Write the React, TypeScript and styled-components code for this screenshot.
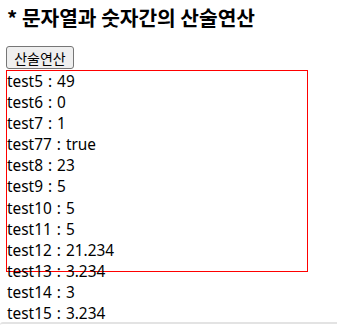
import styled, { createGlobalStyle } from 'styled-components'

const GlobalStyle = createGlobalStyle`
  html, body {
    margin: 0;
    background: #ffffff;
  }
  body {
    padding: 0 6px;
    font-family: 'Noto Sans', 'Noto Sans CJK KR', sans-serif;
    color: #000000;
  }
`

const Title = styled.h3`
  margin: 4px 0 16px 1px;
  font-family: 'Noto Sans CJK KR', sans-serif;
  font-size: 20.3px;
  font-weight: 700;
  line-height: 26px;
`

const Button = styled.button`
  display: block;
  box-sizing: border-box;
  width: 68px;
  height: 23px;
  margin: 0 0 1px;
  padding: 0;
  font-family: 'Noto Sans CJK KR', sans-serif;
  font-size: 14px;
  line-height: 1;
  color: #000000;
  background: #efefef;
  border: 1px solid #767676;
  border-radius: 3px;
`

const Section = styled.div`
  padding-bottom: 60px;
`

const ResultBox = styled.div`
  width: 300px;
  height: 200px;
  border: 1px solid #ff0000;
`

const Line = styled.div`
  font-size: 15.4px;
  line-height: 21.1px;
  white-space: pre;
  word-spacing: 1px;
`

const WindowEdge = styled.div`
  position: fixed;
  left: 0;
  right: 0;
  bottom: 0;
  height: 1px;
  background: #ffffff;
  border-top: 2px solid #e3e3e3;
  border-top-left-radius: 4px;
`

const results: [string, string][] = [
  ['test5', '49'],
  ['test6', '0'],
  ['test7', '1'],
  ['test77', 'true'],
  ['test8', '23'],
  ['test9', '5'],
  ['test10', '5'],
  ['test11', '5'],
  ['test12', '21.234'],
  ['test13', '3.234'],
  ['test14', '3'],
  ['test15', '3.234'],
]

export default function App() {
  return (
    <>
      <GlobalStyle />
      <Title>* 문자열과 숫자간의 산술연산</Title>
      <Button>산술연산</Button>
      <Section>
        <ResultBox>
          {results.map(([name, value]) => (
            <Line key={name}>
              {name} : {value}
            </Line>
          ))}
        </ResultBox>
      </Section>
      <WindowEdge />
    </>
  )
}
